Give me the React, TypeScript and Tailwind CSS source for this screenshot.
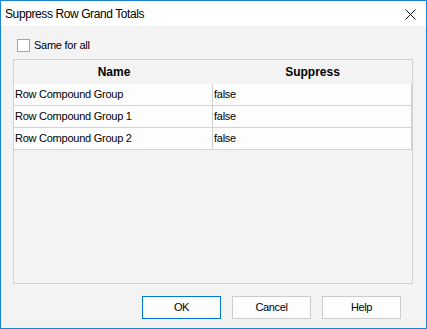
import React from 'react';

const rows = [
    { name: 'Row Compound Group', suppress: 'false' },
    { name: 'Row Compound Group 1', suppress: 'false' },
    { name: 'Row Compound Group 2', suppress: 'false' },
];

function DlgButton({ label, primary }: { label: string; primary?: boolean }) {
    return (
        <button
            className={`w-[79px] h-[23px] flex items-center justify-center bg-[#fdfdfd] text-[11px] tracking-[-0.4px] text-black leading-none border ${primary ? 'border-[#0078d7]' : 'border-[#cccccc]'}`}
        >
            {label}
        </button>
    );
}

export default function App() {
    return (
        <div
            className="w-[427px] h-[329px] flex flex-col border border-[#1883d7] bg-[#f3f3f3] text-black"
            style={{ fontFamily: '"Liberation Sans", Arial, sans-serif' }}
        >
            {/* title bar */}
            <div className="h-[25px] bg-white flex items-center justify-between pl-[4px] pr-[10px]">
                <span className="text-[12px] tracking-[-0.4px] leading-none">Suppress Row Grand Totals</span>
                <svg width="11" height="11" viewBox="0 0 11 11" className="mt-[1px]">
                    <path d="M0.5 0.5 L10.5 10.5 M10.5 0.5 L0.5 10.5" stroke="#111" strokeWidth="1" fill="none" />
                </svg>
            </div>

            <div className="flex-1 flex flex-col px-[12px]">
                <div className="flex items-center gap-[3px] mt-[13px] pl-[4px] h-[13px]">
                    <span className="w-[13px] h-[13px] bg-white border border-[#a6a6a6]" />
                    <span className="text-[11px] tracking-[-0.25px] leading-none ml-[1px]">Same for all</span>
                </div>

                <div className="mt-[7px] w-[400px] h-[225px] border border-[#d2d2d2] flex flex-col">
                    <div className="h-[24px] flex items-center text-[12px] font-bold leading-none">
                        <div className="w-[199px] text-center pl-[1px]">Name</div>
                        <div className="flex-1 text-center">Suppress</div>
                    </div>
                    {rows.map((r, i) => (
                        <div key={i} className="h-[22px] flex bg-[#fcfdfc] border-b border-r border-[#d2d2d2] text-[11px] tracking-[-0.25px] leading-none">
                            <div className="w-[199px] flex items-center pl-[1px] border-r border-[#d2d2d2]">{r.name}</div>
                            <div className="flex-1 flex items-center pl-[1px]">{r.suppress}</div>
                        </div>
                    ))}
                </div>

                <div className="flex justify-end gap-[11px] mt-[12px] pr-[13px]">
                    <DlgButton label="OK" primary />
                    <DlgButton label="Cancel" />
                    <DlgButton label="Help" />
                </div>
            </div>
        </div>
    );
}
